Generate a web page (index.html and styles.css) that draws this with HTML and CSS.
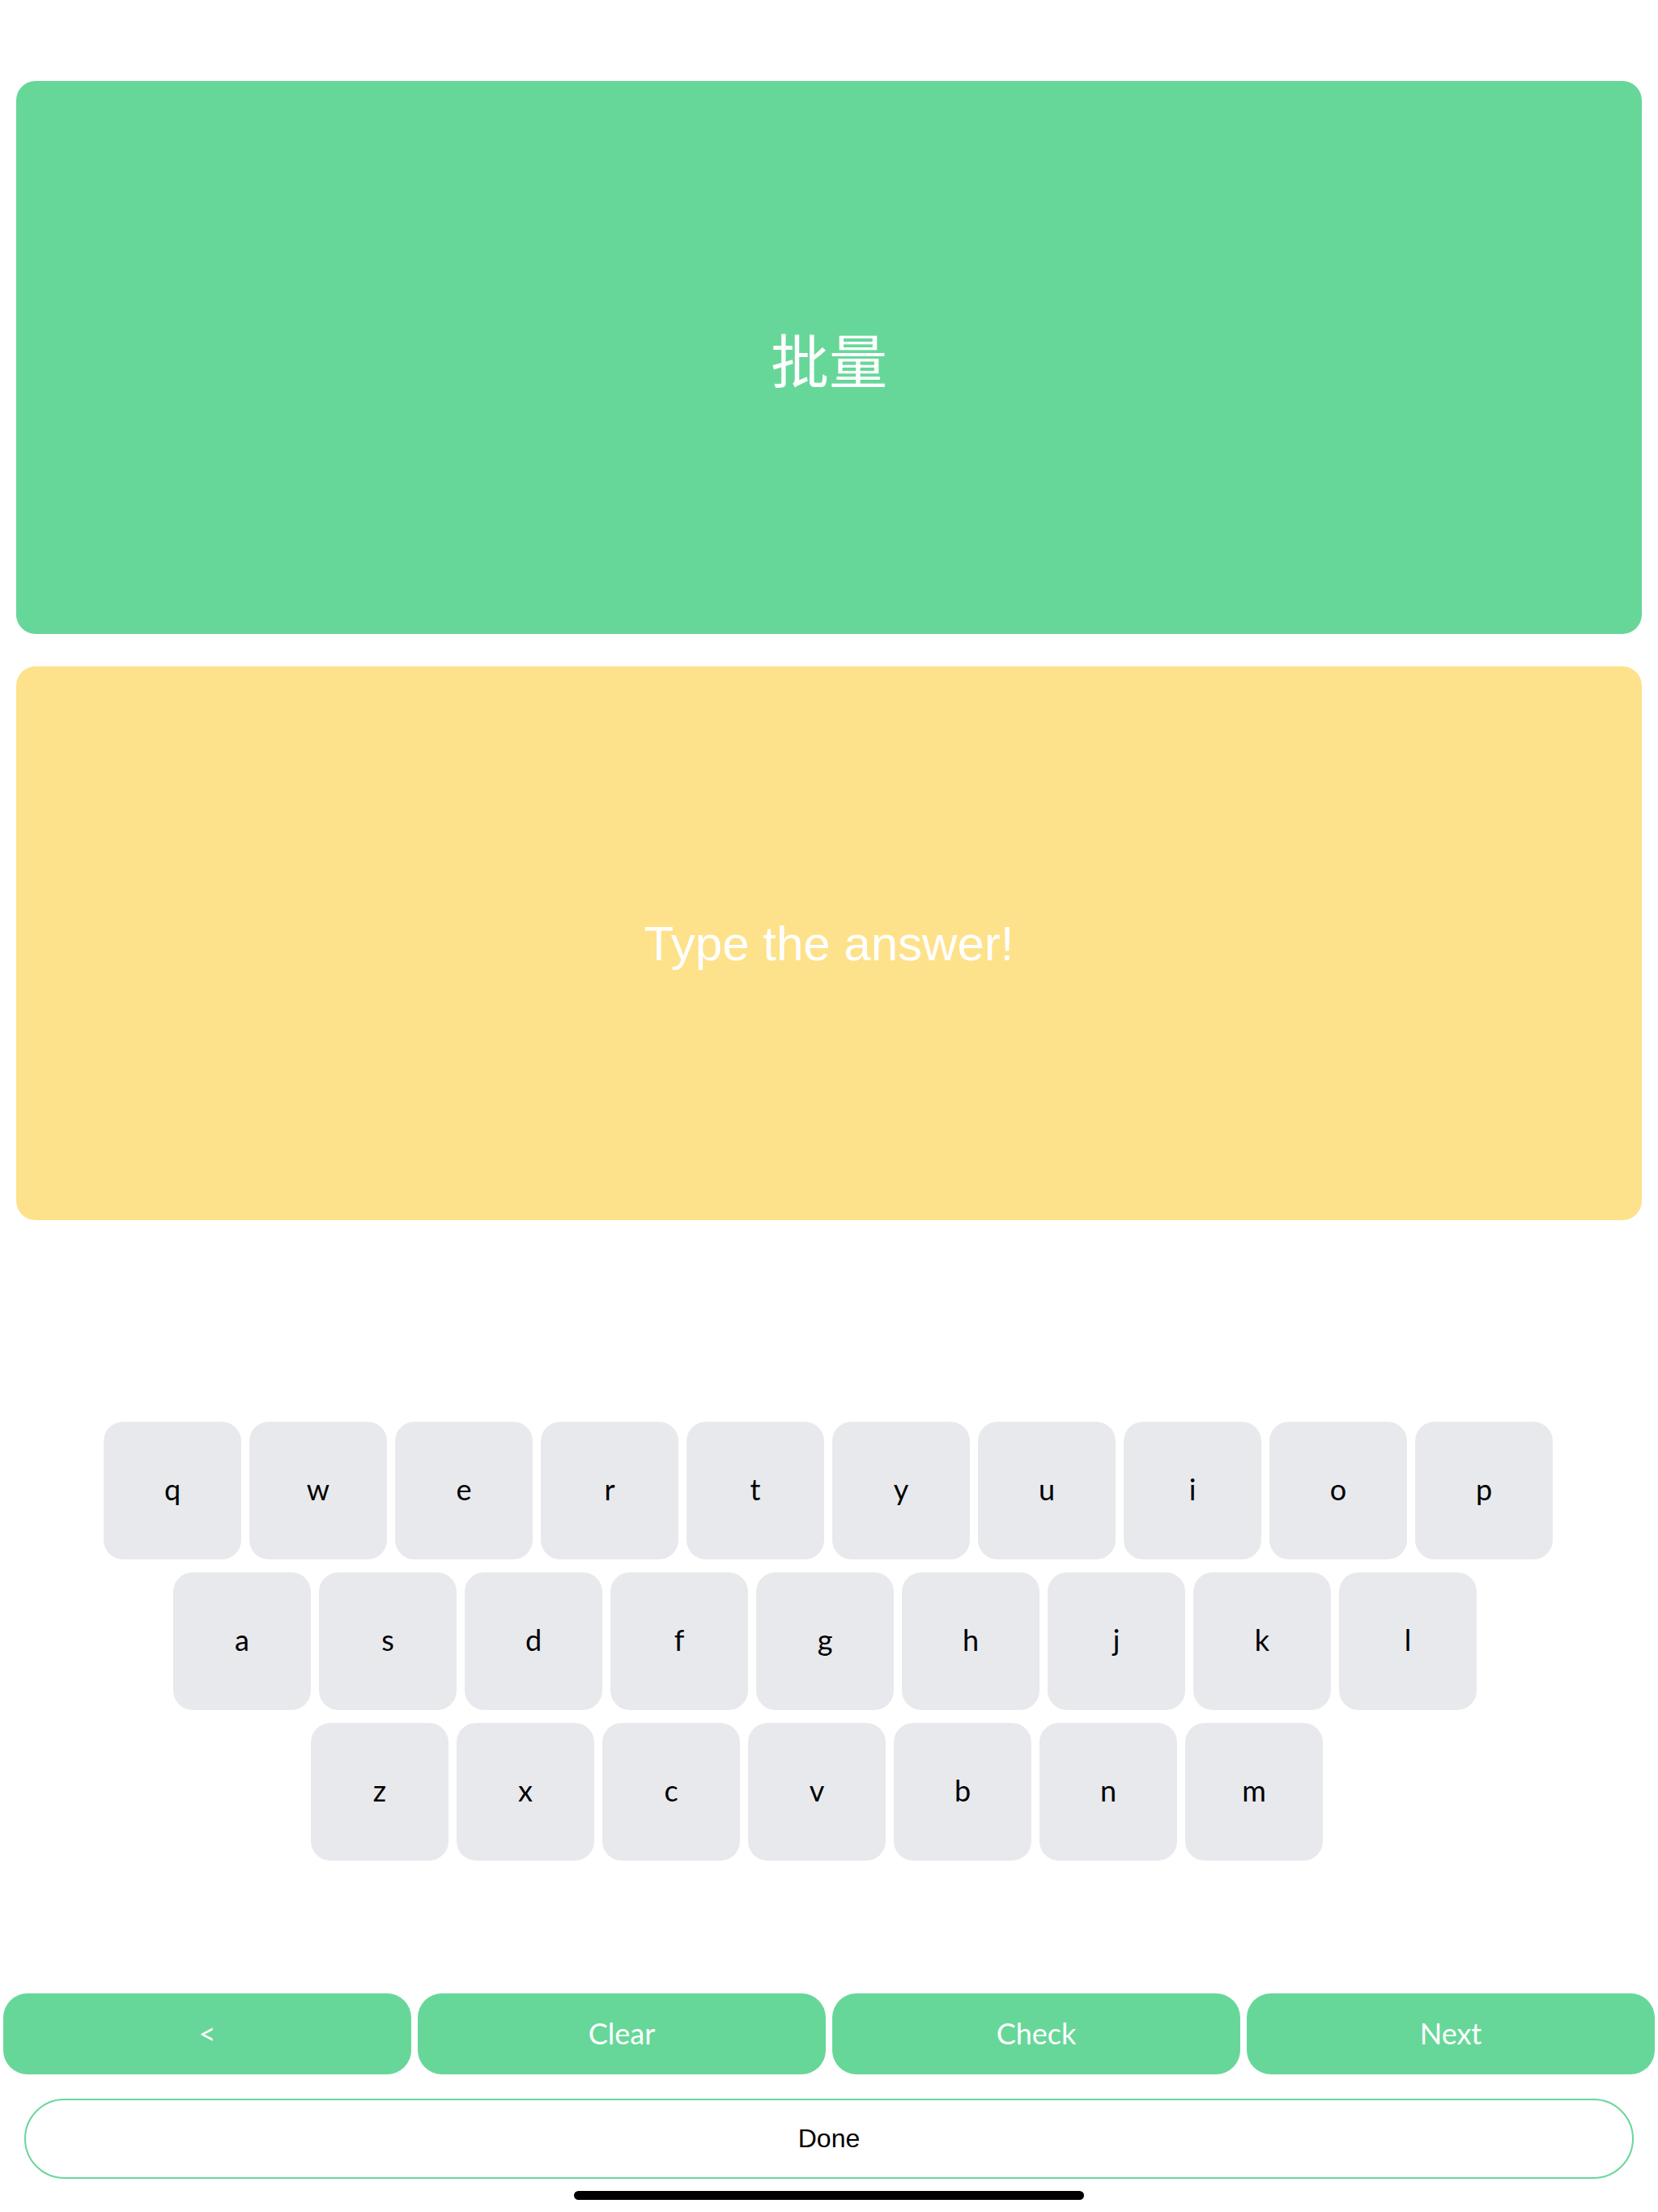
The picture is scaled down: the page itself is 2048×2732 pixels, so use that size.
FILE: index.html
```html
<!DOCTYPE html>
<html lang="zh">
<head>
    <meta charset="UTF-8">
    <meta name="viewport" content="width=device-width, initial-scale=1.0">
    <title>Flashcard</title>
    <link rel="stylesheet" href="styles.css">
</head>
<body>
    <div class="container">
        <div class="card card-question">
            <span class="question">批量</span>
        </div>
        <div class="card card-answer">
            <span class="answer">Type the answer!</span>
        </div>

        <div class="keyboard">
            <div class="key-row row-1">
                <div class="key">q</div>
                <div class="key">w</div>
                <div class="key">e</div>
                <div class="key">r</div>
                <div class="key">t</div>
                <div class="key">y</div>
                <div class="key">u</div>
                <div class="key">i</div>
                <div class="key">o</div>
                <div class="key">p</div>
            </div>
            <div class="key-row row-2">
                <div class="key">a</div>
                <div class="key">s</div>
                <div class="key">d</div>
                <div class="key">f</div>
                <div class="key">g</div>
                <div class="key">h</div>
                <div class="key">j</div>
                <div class="key">k</div>
                <div class="key">l</div>
            </div>
            <div class="key-row row-3">
                <div class="key">z</div>
                <div class="key">x</div>
                <div class="key">c</div>
                <div class="key">v</div>
                <div class="key">b</div>
                <div class="key">n</div>
                <div class="key">m</div>
            </div>
        </div>

        <div class="actions">
            <div class="action-btn">&lt;</div>
            <div class="action-btn">Clear</div>
            <div class="action-btn">Check</div>
            <div class="action-btn">Next</div>
        </div>
        <div class="done-btn">Done</div>
        <div class="home-indicator"></div>
    </div>
</body>
</html>
```

FILE: styles.css
```css
*{
    box-sizing: border-box;
}
body{
    margin: 0;
    background-color: #fff;
    font-family: Lato, "Open Sans", sans-serif;
}
.container{
    width: 2048px;
    height: 2732px;
    display: flex;
    flex-direction: column;
    padding-top: 100px;
}
.card{
    margin: 0 20px;
    height: 683px;
    border-radius: 24px;
    display: flex;
    align-items: center;
    justify-content: center;
}
.card-question{
    background-color: #67d799;
}
.card-answer{
    background-color: #fde28b;
    margin-top: 40px;
    height: 684px;
}
.question{
    color: #fff;
    font-family: "Noto Sans CJK SC", sans-serif;
    font-size: 72px;
}
.answer{
    color: #fff;
    font-family: "Liberation Sans", Arial, sans-serif;
    font-size: 60px;
}

.keyboard{
    margin-top: 249px;
    display: flex;
    flex-direction: column;
    gap: 16px;
}
.key-row{
    display: flex;
    gap: 10px;
}
.row-1{
    padding-left: 128px;
}
.row-2{
    padding-left: 214px;
}
.row-3{
    padding-left: 384px;
}
.key{
    width: 170px;
    height: 170px;
    background-color: #e8e9ed;
    border-radius: 24px;
    display: flex;
    align-items: center;
    justify-content: center;
    font-size: 36px;
    color: #000;
    padding-bottom: 4px;
}

.actions{
    margin-top: 164px;
    display: flex;
    gap: 8px;
    padding: 0 4px;
}
.action-btn{
    flex: 1;
    height: 100px;
    background-color: #67d799;
    border-radius: 30px;
    color: #fff;
    font-size: 36px;
    display: flex;
    align-items: center;
    justify-content: center;
    padding-bottom: 3px;
}
.done-btn{
    margin: 30px 30px 0;
    height: 99px;
    border: 2px solid #67d799;
    border-radius: 50px;
    display: flex;
    align-items: center;
    justify-content: center;
    font-family: "Liberation Sans", Arial, sans-serif;
    font-size: 32px;
    color: #000;
}
.home-indicator{
    width: 630px;
    height: 11px;
    margin: 15px auto 0;
    background-color: #000;
    border-radius: 6px;
}
```
